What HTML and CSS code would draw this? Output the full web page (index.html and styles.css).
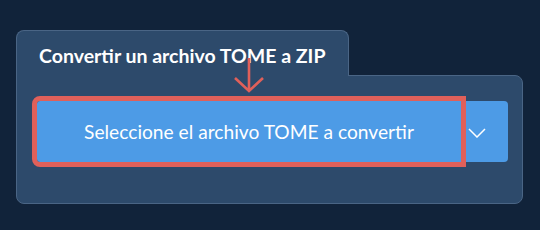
FILE: index.html
```html
<!DOCTYPE html>
<html>
<head>
<meta charset="utf-8">
<link rel="stylesheet" href="styles.css">
</head>
<body>
<div class="page">
  <div class="card">
    <div class="tab">Convertir un archivo TOME a ZIP</div>
    <div class="panel">
      <div class="btn-group">
        <button class="btn-main">Seleccione el archivo TOME a convertir</button>
        <button class="btn-drop" aria-label="Más opciones">
          <svg width="18" height="10" viewBox="0 0 18 10"><path d="M1 1 L9 9 L17 1" fill="none" stroke="#fff" stroke-width="1.5"/></svg>
        </button>
      </div>
      <svg class="arrow" width="32" height="36" viewBox="0 0 32 36"><path d="M16 0 V33 M2 20 L16 33 L30 20" fill="none" stroke="#e0605a" stroke-width="2.6"/></svg>
    </div>
  </div>
</div>
</body>
</html>
```
FILE: styles.css
```css
html, body {
  margin: 0;
  padding: 0;
  background: #11233a;
  width: 540px;
  height: 230px;
  overflow: hidden;
  font-family: Lato, "Open Sans", sans-serif;
}
.page {
  padding: 30px 0 0 16px;
}
.card {
  width: 507px;
  position: relative;
}
.tab {
  width: 331px;
  height: 32px;
  box-sizing: content-box;
  padding-top: 13px;
  background: #2d4a6b;
  border: 1px solid #4a6585;
  border-bottom: none;
  border-radius: 8px 8px 0 0;
  color: #fff;
  font-weight: 700;
  font-size: 19.5px;
  line-height: 24px;
  text-indent: 22px;
  position: relative;
  z-index: 2;
  margin-bottom: -1px;
}
.panel {
  position: relative;
  background: #2d4a6b;
  border: 1px solid #4a6585;
  border-radius: 0 8px 8px 8px;
  padding: 25px 14px 41px 20px;
}
.btn-group {
  display: flex;
  height: 61px;
}
.btn-main {
  flex: 1;
  border: none;
  margin: 0;
  background: #4d9be6;
  color: #fff;
  font-family: Lato, "Open Sans", sans-serif;
  font-size: 19.2px;
  font-weight: 400;
  border-radius: 3px 0 0 3px;
  outline: 5px solid #e0605a;
  position: relative;
  z-index: 1;
  padding: 0;
}
.btn-drop {
  width: 47px;
  border: none;
  margin: 0;
  background: #4d9be6;
  border-radius: 0 4px 4px 0;
  display: flex;
  align-items: center;
  justify-content: flex-start;
  padding: 2px 0 0 7px;
}
.arrow {
  position: absolute;
  left: 216px;
  top: -18px;
  z-index: 3;
}
```
